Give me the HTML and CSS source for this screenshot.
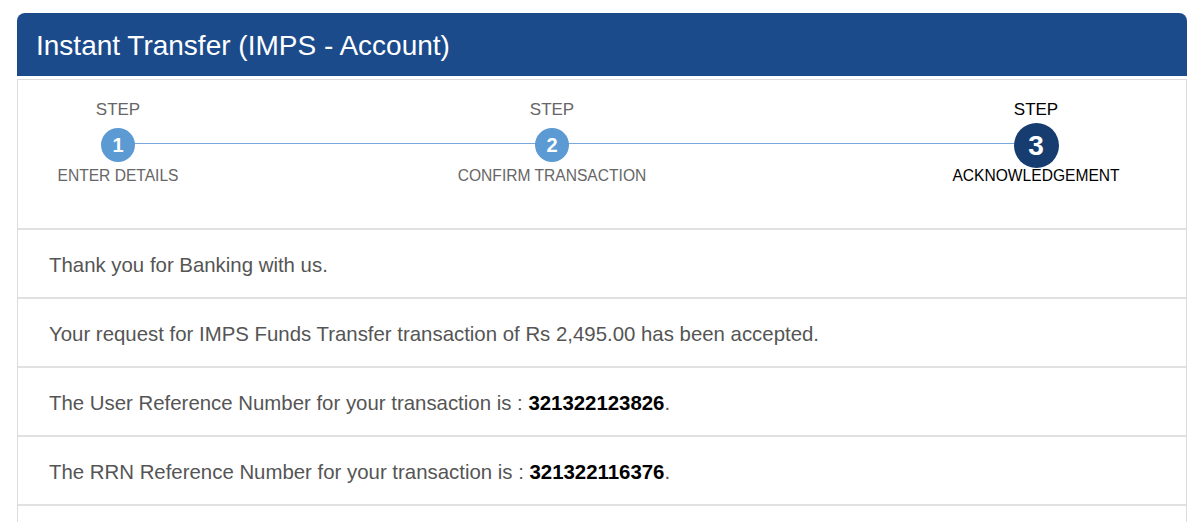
FILE: index.html
```html
<!DOCTYPE html>
<html lang="en">
<head>
    <meta charset="UTF-8">
    <meta name="viewport" content="width=device-width, initial-scale=1.0">
    <title>Instant Transfer (IMPS - Account)</title>
    <link rel="stylesheet" href="styles.css">
</head>
<body>
    <section class="panel">
        <div class="panel-head">
            <h1>Instant Transfer (IMPS - Account)</h1>
        </div>
        <div class="panel-body">
            <div class="steps">
                <div class="step done">
                    <div class="step-top">STEP</div>
                    <div class="step-num">1</div>
                    <div class="step-name">ENTER DETAILS</div>
                </div>
                <div class="step done">
                    <div class="step-top">STEP</div>
                    <div class="step-num">2</div>
                    <div class="step-name">CONFIRM TRANSACTION</div>
                </div>
                <div class="step active">
                    <div class="step-top">STEP</div>
                    <div class="step-num">3</div>
                    <div class="step-name">ACKNOWLEDGEMENT</div>
                </div>
            </div>
            <div class="row">Thank you for Banking with us.</div>
            <div class="row">Your request for IMPS Funds Transfer transaction of Rs 2,495.00 has been accepted.</div>
            <div class="row">The User Reference Number for your transaction is :&nbsp;<b>321322123826</b>.</div>
            <div class="row">The RRN Reference Number for your transaction is :&nbsp;<b>321322116376</b>.</div>
            <div class="row last"></div>
        </div>
    </section>
</body>
</html>
```

FILE: styles.css
```css
*{
    margin: 0;
    padding: 0;
    box-sizing: border-box;
    font-family: "Liberation Sans", Arial, sans-serif;
}
body{
    background: #fff;
    padding: 13px 13px 0 17px;
    height: 522px;
    overflow: hidden;
}
.panel-head{
    background-color: #1c4b8c;
    border-radius: 8px 8px 0 0;
    height: 63px;
    padding: 0 19px;
    display: flex;
    align-items: center;
}
.panel-head h1{
    color: #fff;
    font-size: 28px;
    font-weight: normal;
    padding-top: 2px;
}
.panel-body{
    margin-top: 3px;
    border: 1px solid #dcdcdc;
    border-bottom: none;
}
.steps{
    position: relative;
    display: grid;
    grid-template-columns: 200px 668px 1fr;
    height: 150px;
    padding-top: 20px;
    border-bottom: 2px solid #e1e1e4;
}
.steps::before{
    content: "";
    position: absolute;
    top: 63px;
    left: 100px;
    right: 149px;
    height: 1px;
    background: #7aa8de;
}
.step{
    position: relative;
    display: flex;
    flex-direction: column;
    align-items: center;
    color: #666;
    font-size: 15.6px;
}
.step-top{
    font-size: 17px;
    line-height: 20px;
}
.step-num{
    width: 34px;
    height: 34px;
    margin-top: 8px;
    border-radius: 50%;
    background: #5b9ad3;
    color: #fff;
    font-weight: bold;
    font-size: 20px;
    display: flex;
    justify-content: center;
    align-items: center;
}
.step-name{
    line-height: 18px;
    margin-top: 5px;
}
.step.active{
    color: #000;
}
.step.active .step-num{
    width: 45px;
    height: 45px;
    margin-top: 3px;
    background: #173c70;
    font-size: 28px;
}
.step.active .step-name{
    margin-top: -1px;
}
.row{
    height: 69px;
    padding: 3px 31px 0;
    display: flex;
    align-items: center;
    font-size: 20.4px;
    color: #555;
    border-bottom: 2px solid #e1e1e4;
}
.row.last{
    height: 16px;
    border-bottom: none;
}
.row b{
    color: #000;
}
```
